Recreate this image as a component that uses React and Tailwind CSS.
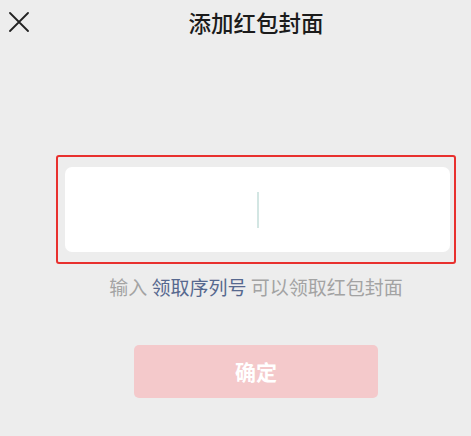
export default function App() {
  return (
    <div
      className="w-[471px] h-[436px] bg-[#ededed] overflow-hidden"
      style={{ fontFamily: '"Noto Sans CJK SC", "Noto Sans", sans-serif' }}
    >
      {/* Header */}
      <div className="flex items-center h-[44px] pl-[9px]">
        <svg width="20" height="20" viewBox="0 0 20 20" className="shrink-0">
          <path
            d="M1 1 L19 19 M19 1 L1 19"
            stroke="#222"
            strokeWidth="1.8"
            strokeLinecap="round"
            fill="none"
          />
        </svg>
        <h1 className="flex-1 text-center pl-[12px] text-[22.5px] font-medium text-[#1b1b1b] leading-none">
          添加红包封面
        </h1>
      </div>

      {/* Content */}
      <div className="flex flex-col items-center pl-[41px]">
        <div className="mt-[111px] w-[400px] h-[109px] border-2 border-[#e8302e] rounded-[3px] pl-[7px] pr-[4px] py-[10px]">
          <div className="h-full bg-white rounded-[7px] flex items-center justify-center">
            <div className="w-[2px] h-[36px] bg-[#d3e6e3]" />
          </div>
        </div>

        <p className="mt-[10px] text-[19px] leading-[26px] text-[#a3a3a3]">
          输入 <span className="text-[#56688f]">领取序列号</span> 可以领取红包封面
        </p>

        <button className="mt-[45px] w-[244px] h-[53px] rounded-[5px] bg-[#f4c9cb] text-white text-[21px] font-bold">
          确定
        </button>
      </div>
    </div>
  );
}
